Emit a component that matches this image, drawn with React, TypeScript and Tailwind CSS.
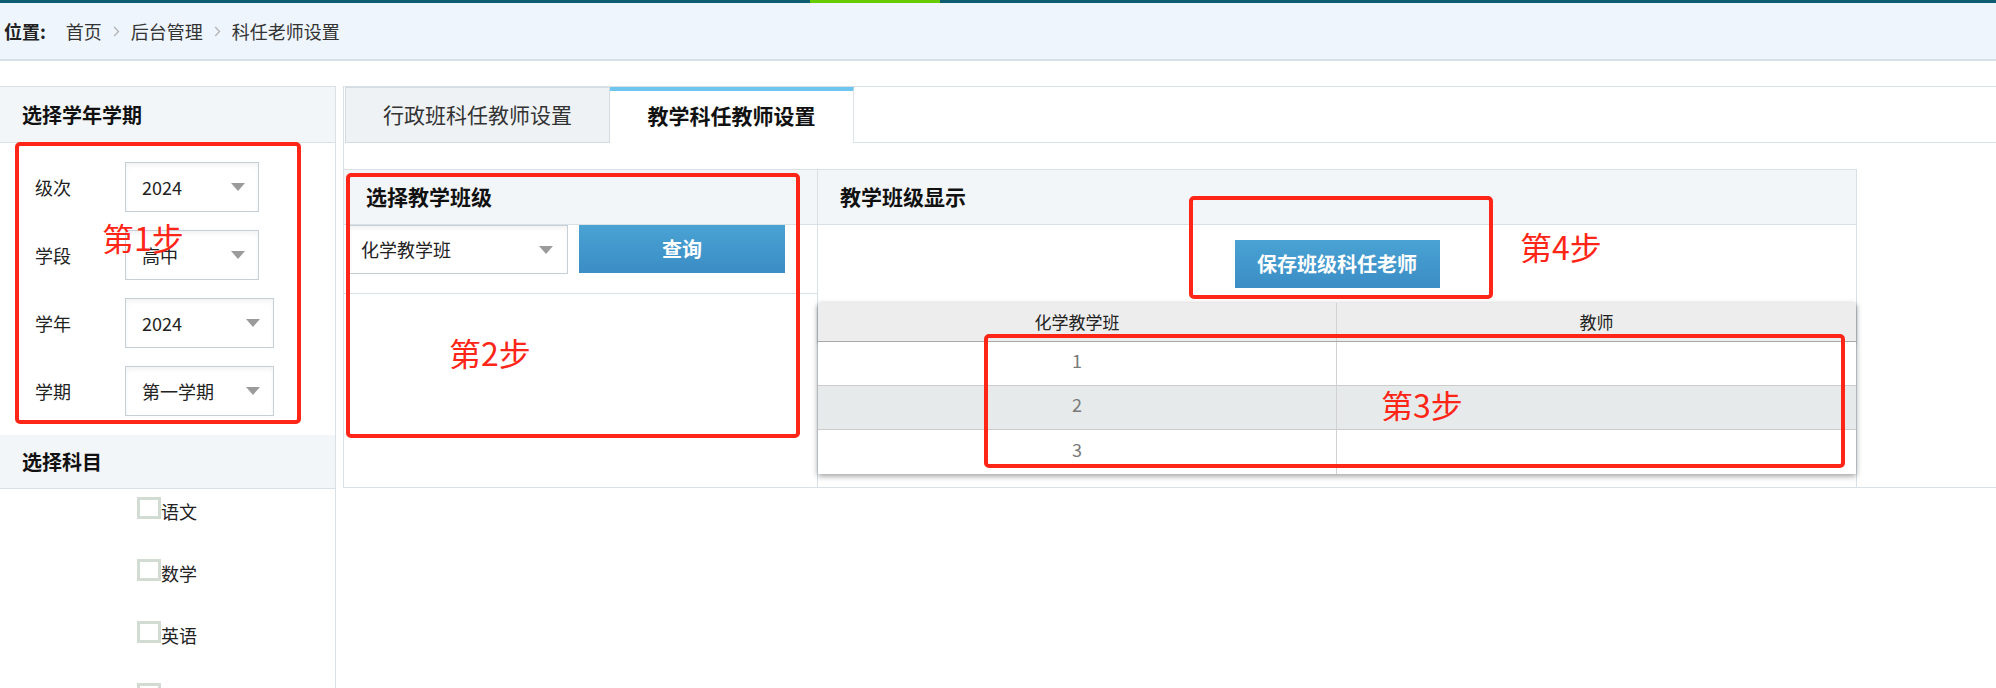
import React from 'react'

const subjects = ['语文', '数学', '英语', '物理', '化学']

function Chevron(): React.JSX.Element {
  return (
    <svg width="7" height="11" viewBox="0 0 7 11" className="mx-[11px]">
      <path d="M1.2 1l4.3 4.5L1.2 10" fill="none" stroke="#b4b4b4" strokeWidth="1.3" />
    </svg>
  )
}

function Arrow(): React.JSX.Element {
  return <span className="w-0 h-0 border-x-[7px] border-x-transparent border-t-[8px] border-t-[#9b9b9b]" />
}

function Select({ value, w }: { value: string; w: string }): React.JSX.Element {
  return (
    <div
      className={`${w} h-[50px] border border-[#c6cfd7] bg-white shadow-[inset_0_3px_4px_rgba(0,0,0,0.05)] flex items-center justify-between pl-[16px] pr-[13px] text-[18px] text-[#222]`}
    >
      <span>{value}</span>
      <Arrow />
    </div>
  )
}

function Step({ label, box, text }: { label: string; box: string; text: string }): React.JSX.Element {
  return (
    <>
      <div className={`absolute ${box} border-4 border-[#ff2618] rounded-[5px] pointer-events-none`} />
      <div className={`absolute ${text} text-[32px] leading-none text-[#ff2618] pointer-events-none`}>{label}</div>
    </>
  )
}

export default function App(): React.JSX.Element {
  const rows = ['1', '2', '3']
  return (
    <div className="relative w-[1996px] h-[688px] overflow-hidden bg-white font-['Noto_Sans_CJK_SC','Noto_Sans',sans-serif] text-[#333]">
      {/* 顶部细条 */}
      <div className="flex h-[3px] bg-[#0d5c70]">
        <div className="w-[810px]" />
        <div className="w-[130px] bg-[#66cc00]" />
      </div>

      {/* 面包屑 */}
      <div className="h-[58px] bg-[#eef5fc] border-b-2 border-[#d6e2e8] flex items-center pl-[4px] text-[18px]">
        <span className="font-bold text-[#222]">位置:</span>
        <span className="ml-[20px]">首页</span>
        <Chevron />
        <span>后台管理</span>
        <Chevron />
        <span>科任老师设置</span>
      </div>

      <div className="flex items-start mt-[25px]">
        {/* 左侧栏 */}
        <div className="w-[336px] h-[602px] shrink-0 overflow-hidden border-t border-r border-[#d9e0e6]">
          <div className="h-[56px] bg-[#f3f6f8] border-b border-[#d9e0e6] flex items-center pl-[22px] text-[20px] font-bold text-[#111]">
            选择学年学期
          </div>
          <div className="flex flex-col gap-[18px] pt-[19px]">
            {[
              ['级次', '2024', 'w-[134px]'],
              ['学段', '高中', 'w-[134px]'],
              ['学年', '2024', 'w-[149px]'],
              ['学期', '第一学期', 'w-[149px]'],
            ].map(([label, value, w]) => (
              <div key={label} className="flex items-center">
                <span className="w-[125px] pl-[35px] text-[18px] text-[#222]">{label}</span>
                <Select value={value} w={w} />
              </div>
            ))}
          </div>
          <div className="mt-[19px] h-[54px] bg-[#f3f6f8] border-b border-[#d9e0e6] flex items-center pl-[22px] text-[20px] font-bold text-[#111]">
            选择科目
          </div>
          <div className="flex flex-col gap-[40px] pt-[8px] pl-[137px]">
            {subjects.map((s) => (
              <label key={s} className="h-[22px] shrink-0 flex items-end">
                <span className="w-[24px] h-[22px] border-[3px] border-[#d3dcd3] bg-white" />
                <span className="text-[18px] leading-[22px] text-[#222] translate-y-[3px]">{s}</span>
              </label>
            ))}
          </div>
        </div>

        {/* 主区域 */}
        <div className="ml-[7px] flex-1 h-[402px] border-l border-t border-b border-[#d9e0e6] flex flex-col">
          <div className="flex h-[56px] shrink-0 pl-[1px]">
            <div className="w-[265px] bg-[#eef2f5] border border-[#d3dce2] flex items-center justify-center text-[21px] text-[#333]">
              行政班科任教师设置
            </div>
            <div className="w-[244px] bg-white border-t-4 border-t-[#6ec6ee] border-r border-r-[#dde3e8] flex items-center justify-center text-[21px] font-bold text-[#111] pb-[3px]">
              教学科任教师设置
            </div>
            <div className="flex-1 border-b border-[#d9e0e6]" />
          </div>

          <div className="mt-[26px] flex-1 flex">
            {/* 选择教学班级 */}
            <div className="w-[474px] border-t border-r border-[#d9e0e6] flex flex-col">
              <div className="h-[55px] shrink-0 bg-[#f3f6f8] border-b border-[#d9e0e6] flex items-center pl-[22px] text-[21px] font-bold text-[#111]">
                选择教学班级
              </div>
              <div className="h-[69px] shrink-0 border-b border-[#d9e0e6] flex items-start pl-[5px] gap-[11px]">
                <div className="w-[219px] h-[49px] border border-[#c6cfd7] bg-white shadow-[inset_0_3px_4px_rgba(0,0,0,0.05)] flex items-center justify-between pl-[11px] pr-[14px] text-[18px] text-[#222]">
                  <span>化学教学班</span>
                  <Arrow />
                </div>
                <button
                  type="button"
                  className="w-[206px] h-[48px] bg-gradient-to-b from-[#4aa2d3] to-[#3a8dc5] text-white text-[20px] font-bold"
                >
                  查询
                </button>
              </div>
            </div>

            {/* 教学班级显示 */}
            <div className="w-[1039px] border-t border-r border-[#d9e0e6] flex flex-col">
              <div className="h-[55px] shrink-0 bg-[#f3f6f8] border-b border-[#d9e0e6] flex items-center pl-[22px] text-[21px] font-bold text-[#111]">
                教学班级显示
              </div>
              <div className="pt-[15px] flex justify-center">
                <button
                  type="button"
                  className="w-[205px] h-[48px] bg-gradient-to-b from-[#4aa2d3] to-[#3a8dc5] text-white text-[20px] font-bold"
                >
                  保存班级科任老师
                </button>
              </div>
              <div className="mt-[15px] shadow-[0_2px_6px_rgba(0,0,0,0.4)] bg-white">
                <div className="grid grid-cols-2 h-[39px] bg-[#ededed] border-b border-[#a8a8a8] shadow-[0_2px_3px_rgba(0,0,0,0.2)] text-[17px] text-[#222]">
                  <div className="flex items-center justify-center border-r border-[#d2d2d2]">化学教学班</div>
                  <div className="flex items-center justify-center">教师</div>
                </div>
                {rows.map((r, i) => (
                  <div
                    key={r}
                    className={`grid grid-cols-2 h-[44px] text-[18px] text-[#7a7a7a] ${i === 1 ? 'bg-[#e6eaea]' : 'bg-white'} ${i < 2 ? 'border-b border-[#cccccc]' : ''}`}
                  >
                    <div className="flex items-center justify-center border-r border-[#d2d2d2] pb-[6px]">{r}</div>
                    <div />
                  </div>
                ))}
              </div>
            </div>
          </div>
        </div>
      </div>

      {/* 标注 */}
      <Step label="第1步" box="left-[15px] top-[142px] w-[286px] h-[282px]" text="left-[102px] top-[221px]" />
      <Step label="第2步" box="left-[346px] top-[173px] w-[454px] h-[265px]" text="left-[449px] top-[336px]" />
      <Step label="第3步" box="left-[984px] top-[334px] w-[861px] h-[134px]" text="left-[1381px] top-[388px]" />
      <Step label="第4步" box="left-[1189px] top-[196px] w-[304px] h-[103px]" text="left-[1520px] top-[230px]" />
    </div>
  )
}
